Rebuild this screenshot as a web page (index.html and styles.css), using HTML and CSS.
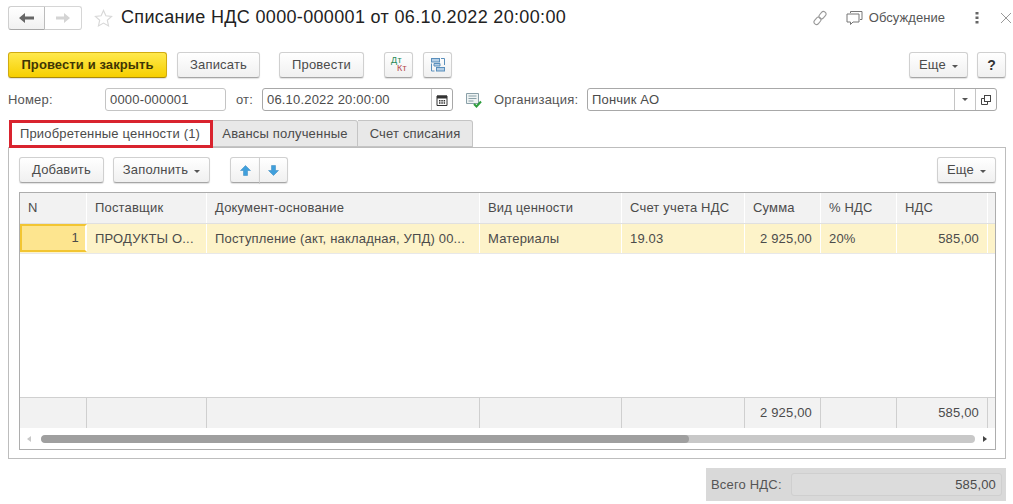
FILE: index.html
```html
<!DOCTYPE html>
<html lang="ru">
<head>
<meta charset="utf-8">
<title>Списание НДС</title>
<link rel="stylesheet" href="styles.css">
</head>
<body>
<div class="page">
  <header class="titlebar">
    <div class="nav">
      <button class="nav-btn nav-back"><svg width="16" height="12" viewBox="0 0 16 12"><path d="M0 6 6 1v3.500h9v3H6V11z" fill="#666"/></svg></button>
      <button class="nav-btn nav-fwd"><svg width="16" height="12" viewBox="0 0 16 12"><path d="M15 6 9 1v3.500H1v3h8V11z" fill="#d4d4d4"/></svg></button>
    </div>
    <svg class="star" width="19" height="19" viewBox="0 0 20 20"><path d="M10 1.500l2.500 5.600 6 .7-4.500 4 1.300 6L10 14.800l-5.300 3 1.300-6-4.500-4 6-.7z" fill="none" stroke="#d8d8d8" stroke-width="1.200"/></svg>
    <h1 class="title">Списание НДС 0000-000001 от 06.10.2022 20:00:00</h1>
    <div class="title-tools">
      <svg class="link-ic" width="16" height="16" viewBox="0 0 16 16"><g fill="none" stroke="#999" stroke-width="1.100"><rect x="8" y="1.200" width="5" height="8" rx="2.500" transform="rotate(40 10.500 5.200)"/><rect x="3" y="6.800" width="5" height="8" rx="2.500" transform="rotate(40 5.500 10.800)"/></g></svg>
      <svg class="talk-ic" width="17" height="16" viewBox="0 0 17 16"><g fill="none" stroke="#777" stroke-width="1"><path d="M4.500 3V1.500h11.500v8h-2"/><path d="M1 4h12v8H7l-2.500 2.500V12H1z"/></g></svg>
      <span class="talk">Обсуждение</span>
      <svg class="dots" width="4" height="12" viewBox="0 0 4 12"><g fill="#666"><rect x="0.500" y="0" width="3" height="2.500"/><rect x="0.500" y="4.500" width="3" height="2.500"/><rect x="0.500" y="9" width="3" height="2.500"/></g></svg>
      <svg class="close" width="12" height="12" viewBox="0 0 12 12"><path d="M1 1l10 10M11 1 1 11" stroke="#999" stroke-width="1" fill="none"/></svg>
    </div>
  </header>

  <div class="commands">
    <button class="btn btn-primary">Провести и закрыть</button>
    <button class="btn b-save">Записать</button>
    <button class="btn b-post">Провести</button>
    <button class="btn b-icon b-dt"><span class="dt">Дт</span><span class="kt">Кт</span></button>
    <button class="btn b-icon b-struct"><svg width="16" height="16" viewBox="0 0 16 16"><g fill="#b5cfe6" stroke="#5a8fbc" stroke-width="1"><rect x="1.500" y="1.500" width="8" height="3.500"/><rect x="6.500" y="10.500" width="8" height="3.500"/></g><path d="M4 6.500h6v2.500H4z" fill="#b5cfe6" stroke="#5a8fbc"/><path d="M1.500 6.500v7.500h3M11 1.500h3.500V8" fill="none" stroke="#5a8fbc"/></svg></button>
    <div class="spacer"></div>
    <button class="btn b-more">Еще<i class="caret"></i></button>
    <button class="btn b-help">?</button>
  </div>

  <div class="fields">
    <label class="lbl l-num">Номер:</label>
    <div class="input i-num">0000-000001</div>
    <label class="lbl l-from">от:</label>
    <div class="input i-date"><span class="val">06.10.2022 20:00:00</span><span class="addon a-cal"><svg width="12" height="12" viewBox="0 0 12 12"><path d="M1 2h10v9.500H1z" fill="#fff" stroke="#333"/><path d="M1 1.500h10V4.500H1z" fill="#333"/><path d="M3 6h1.500v1.500H3zM5.300 6h1.500v1.500H5.300zM7.600 6h1.500v1.500H7.600zM3 8.300h1.500v1.500H3zM5.300 8.300h1.500v1.500H5.300zM7.600 8.300h1.500v1.500H7.600z" fill="#333"/></svg></span></div>
    <svg class="doc-ic" width="16" height="16" viewBox="0 0 16 16"><path d="M.500 1.500h12v10H.500z" fill="#eef3f3" stroke="#8aa0a8"/><path d="M2.500 4h8M2.500 6.500h8M2.500 9h5" stroke="#8aa0a8"/><path d="M8 12l2.500 2.500L15 9.500" fill="none" stroke="#2e9e3e" stroke-width="2"/></svg>
    <label class="lbl l-org">Организация:</label>
    <div class="input i-org"><span class="val">Пончик АО</span><span class="addon a-sel"><i class="caret"></i></span><span class="addon a-open"><svg width="10" height="10" viewBox="0 0 10 10"><g fill="none" stroke="#444"><rect x="3.500" y=".500" width="6" height="6" fill="#fff"/><path d="M3.500 3.500h-3v6h6v-3"/></g></svg></span></div>
  </div>

  <div class="tabs">
    <div class="tab tab-active">Приобретенные ценности (1)</div>
    <div class="tab t2">Авансы полученные</div>
    <div class="tab t3">Счет списания</div>
  </div>

  <section class="panel">
    <div class="toolbar">
      <button class="btn b-add">Добавить</button>
      <button class="btn b-fill">Заполнить<i class="caret"></i></button>
      <div class="arrows">
        <button class="btn b-arrow b-up"><svg width="11" height="11" viewBox="0 0 11 11"><path d="M5.500 .500l5 5H7.500v5h-4v-5H.500z" fill="#3f9fdc" stroke="#3486bd" stroke-width=".5"/></svg></button>
        <button class="btn b-arrow b-down"><svg width="11" height="11" viewBox="0 0 11 11"><path d="M5.500 10.500l-5-5h3v-5h4v5h3z" fill="#3f9fdc" stroke="#3486bd" stroke-width=".5"/></svg></button>
      </div>
      <div class="spacer"></div>
      <button class="btn b-more2">Еще<i class="caret"></i></button>
    </div>

    <div class="table">
      <div class="grid head">
        <div class="c">N</div><div class="c">Поставщик</div><div class="c">Документ-основание</div><div class="c">Вид ценности</div><div class="c">Счет учета НДС</div><div class="c">Сумма</div><div class="c">% НДС</div><div class="c">НДС</div><div class="c"></div>
      </div>
      <div class="grid row">
        <div class="c r cur">1</div><div class="c">ПРОДУКТЫ О...</div><div class="c">Поступление (акт, накладная, УПД) 00...</div><div class="c">Материалы</div><div class="c">19.03</div><div class="c r">2 925,00</div><div class="c">20%</div><div class="c r">585,00</div><div class="c"></div>
      </div>
      <div class="body-fill"></div>
      <div class="grid foot">
        <div class="c"></div><div class="c"></div><div class="c"></div><div class="c"></div><div class="c"></div><div class="c r">2 925,00</div><div class="c"></div><div class="c r">585,00</div><div class="c"></div>
      </div>
      <div class="scroll">
        <i class="tri tri-l"></i>
        <div class="track"><div class="thumb"></div></div>
        <i class="tri tri-r"></i>
      </div>
    </div>
  </section>

  <footer class="total">
    <div class="total-box">
      <span class="total-lbl">Всего НДС:</span>
      <div class="total-val">585,00</div>
    </div>
  </footer>
</div>
</body>
</html>
```
FILE: styles.css
```css
* { box-sizing: border-box; }
html, body { margin: 0; padding: 0; background: #fff; }
body { font: 13px/16px "Liberation Sans", Arial, sans-serif; letter-spacing: .18px; color: #4b4b4b; overflow: hidden; }
.page { width: 1013px; height: 504px; padding: 6px 7px 0 8px; display: flex; flex-direction: column; }
button { font: inherit; letter-spacing: inherit; color: inherit; margin: 0; padding: 0; }

.titlebar { display: flex; align-items: center; height: 24px; }
.nav { display: flex; width: 74px; height: 24px; }
.nav-btn { width: 37px; height: 24px; display: flex; align-items: center; justify-content: center; border: 1px solid #d6d6d6; background: #fff; }
.nav-back { border-color: #cfcfcf #bcbcbc #a8a8a8 #cfcfcf; border-radius: 3px 0 0 3px; background: linear-gradient(#fff, #f1f1f1); }
.nav-fwd { border-left: 0; border-bottom-color: #cfcfcf; border-radius: 0 3px 3px 0; }
.star { margin-left: 12px; flex: none; }
.title { margin: 0 0 2px 8px; font-size: 18px; line-height: 22px; font-weight: 400; letter-spacing: .34px; color: #222; white-space: nowrap; }
.title-tools { margin-left: auto; margin-right: -6px; display: flex; align-items: center; height: 24px; }
.link-ic { margin-right: 18px; }
.talk-ic { margin-right: 6px; }
.talk { font-size: 13px; letter-spacing: .05px; color: #555; margin-right: 30px; }
.dots { margin-right: 21px; }

.commands { display: flex; align-items: stretch; height: 26px; margin-top: 22px; }
.spacer { flex: 1; }
.btn { display: flex; align-items: center; justify-content: center; height: 26px; border: 1px solid #d0d0d0; border-bottom-color: #a6a6a6; border-radius: 3px; background: linear-gradient(#fff, #f0f0f0); box-shadow: 0 1px 1px rgba(0,0,0,.12); white-space: nowrap; flex: none; }
.btn-primary { width: 159px; border-color: #d1ab10; border-bottom-color: #a98a0b; background: linear-gradient(#ffe94d, #f6cf00); font-weight: 700; letter-spacing: .1px; color: #3f3604; }
.b-save { width: 83px; margin-left: 10px; }
.b-post { width: 85px; margin-left: 19px; }
.b-icon { width: 29px; }
.b-dt { margin-left: 20px; position: relative; }
.b-struct { margin-left: 10px; }
.dt { position: absolute; left: 6px; top: 3px; font-size: 9px; line-height: 8px; letter-spacing: .3px; color: #1f8a57; }
.kt { position: absolute; left: 12px; top: 11px; font-size: 9px; line-height: 8px; letter-spacing: .3px; color: #b5474a; }
.b-more { width: 59px; }
.b-help { width: 29px; margin-left: 9px; font-weight: 700; color: #333; font-size: 14px; }
.caret { display: inline-block; width: 0; height: 0; margin-left: 6px; margin-top: 2px; border: 3px solid transparent; border-top: 3px solid #555; border-bottom: 0; }

.fields { display: flex; align-items: center; height: 23px; margin-top: 10px; }
.lbl { flex: none; color: #555; }
.l-num { width: 97px; }
.input { height: 23px; border: 1px solid #c4c4c4; border-radius: 3px; background: #fff; display: flex; align-items: center; padding-left: 4px; flex: none; }
.i-num { width: 121px; }
.l-from { margin-left: 10px; width: 26px; }
.i-date { width: 191px; border-color: #a8a8a8; padding: 0 0 0 4px; }
.val { flex: 1; }
.addon { height: 21px; width: 21px; border-left: 1px solid #c4c4c4; display: flex; align-items: center; justify-content: center; flex: none; }
.addon .caret { margin: 0; }
.doc-ic { margin-left: 13px; flex: none; }
.l-org { margin-left: 12px; width: 93px; }
.i-org { width: 410px; border-color: #a8a8a8; }

.tabs { display: flex; height: 28px; margin-top: 9px; padding-left: 1px; position: relative; z-index: 1; }
.tab { height: 27px; padding-top: 5px; text-align: center; background: #e8e8e8; border: 1px solid #c4c4c4; border-left: 0; border-radius: 0 3px 0 0; flex: none; }
.tab-active { width: 204px; height: 28px; padding-right: 2px; background: #fff; border: 3px solid #d9232e; border-radius: 0; padding-top: 3px; }
.t2 { width: 145px; }
.t3 { width: 115px; }

.panel { height: 312px; margin-top: -1px; border: 1px solid #bdbdbd; padding: 9px 9px 8px 10px; display: flex; flex-direction: column; flex: none; }
.toolbar { display: flex; height: 26px; flex: none; }
.b-add { width: 85px; }
.b-fill { width: 97px; margin-left: 9px; }
.arrows { display: flex; margin-left: 20px; }
.b-arrow { width: 30px; border-radius: 0; }
.b-up { border-radius: 3px 0 0 3px; }
.b-down { width: 29px; margin-left: -1px; border-radius: 0 3px 3px 0; }
.b-more2 { width: 59px; }

.table { flex: 1; margin-top: 9px; border: 1px solid #adadad; display: flex; flex-direction: column; min-height: 0; }
.grid { display: grid; grid-template-columns: 67px 120px 273px 142px 123px 76px 76px 91px 1fr; flex: none; }
.c { padding: 0 8px; overflow: hidden; white-space: nowrap; border-right: 1px solid #dcdcdc; display: flex; align-items: center; }
.c:last-child { border-right: 0; }
.r { justify-content: flex-end; }
.head { height: 31px; background: #f2f2f2; border-bottom: 1px solid #e0e0e0; }
.head .c { border-right-color: #fff; }
.row { height: 30px; background: #fdf3c9; border-bottom: 1px solid #e8e8e8; }
.row .c { border-right-color: #fff; }
.cur { background: #fde58f; border: 2px solid #f2c532; height: 28px; padding-right: 6px; }
.body-fill { flex: 1; border-bottom: 1px solid #d0d0d0; }
.foot { height: 30px; background: #f2f2f2; }
.foot .c { border-right-color: #cfcfcf; }
.scroll { height: 21px; display: flex; align-items: center; padding: 1px 8px 0 7px; flex: none; }
.track { flex: 1; height: 8px; margin: 0 8px 0 10px; background: #c8c8c8; border-radius: 4px; overflow: hidden; }
.thumb { width: 648px; height: 8px; background: #9f9f9f; border-radius: 4px; }
.tri { width: 0; height: 0; border: 3px solid transparent; border-left: 0; flex: none; }
.tri-l { border-right: 4px solid #c8c8c8; }
.tri-r { border-left: 4px solid #444; border-right: 0; }

.total { display: flex; justify-content: flex-end; margin-top: 9px; }
.total-box { width: 300px; height: 33px; background: #d9d9d9; display: flex; align-items: center; padding: 0 4px 0 5px; }
.total-lbl { width: 80px; flex: none; color: #555; }
.total-val { flex: 1; height: 23px; border: 1px solid #cfcfcf; border-radius: 3px; background: #dcdcdc; text-align: right; padding: 3px 5px 0 0; color: #4b4b4b; }
```
